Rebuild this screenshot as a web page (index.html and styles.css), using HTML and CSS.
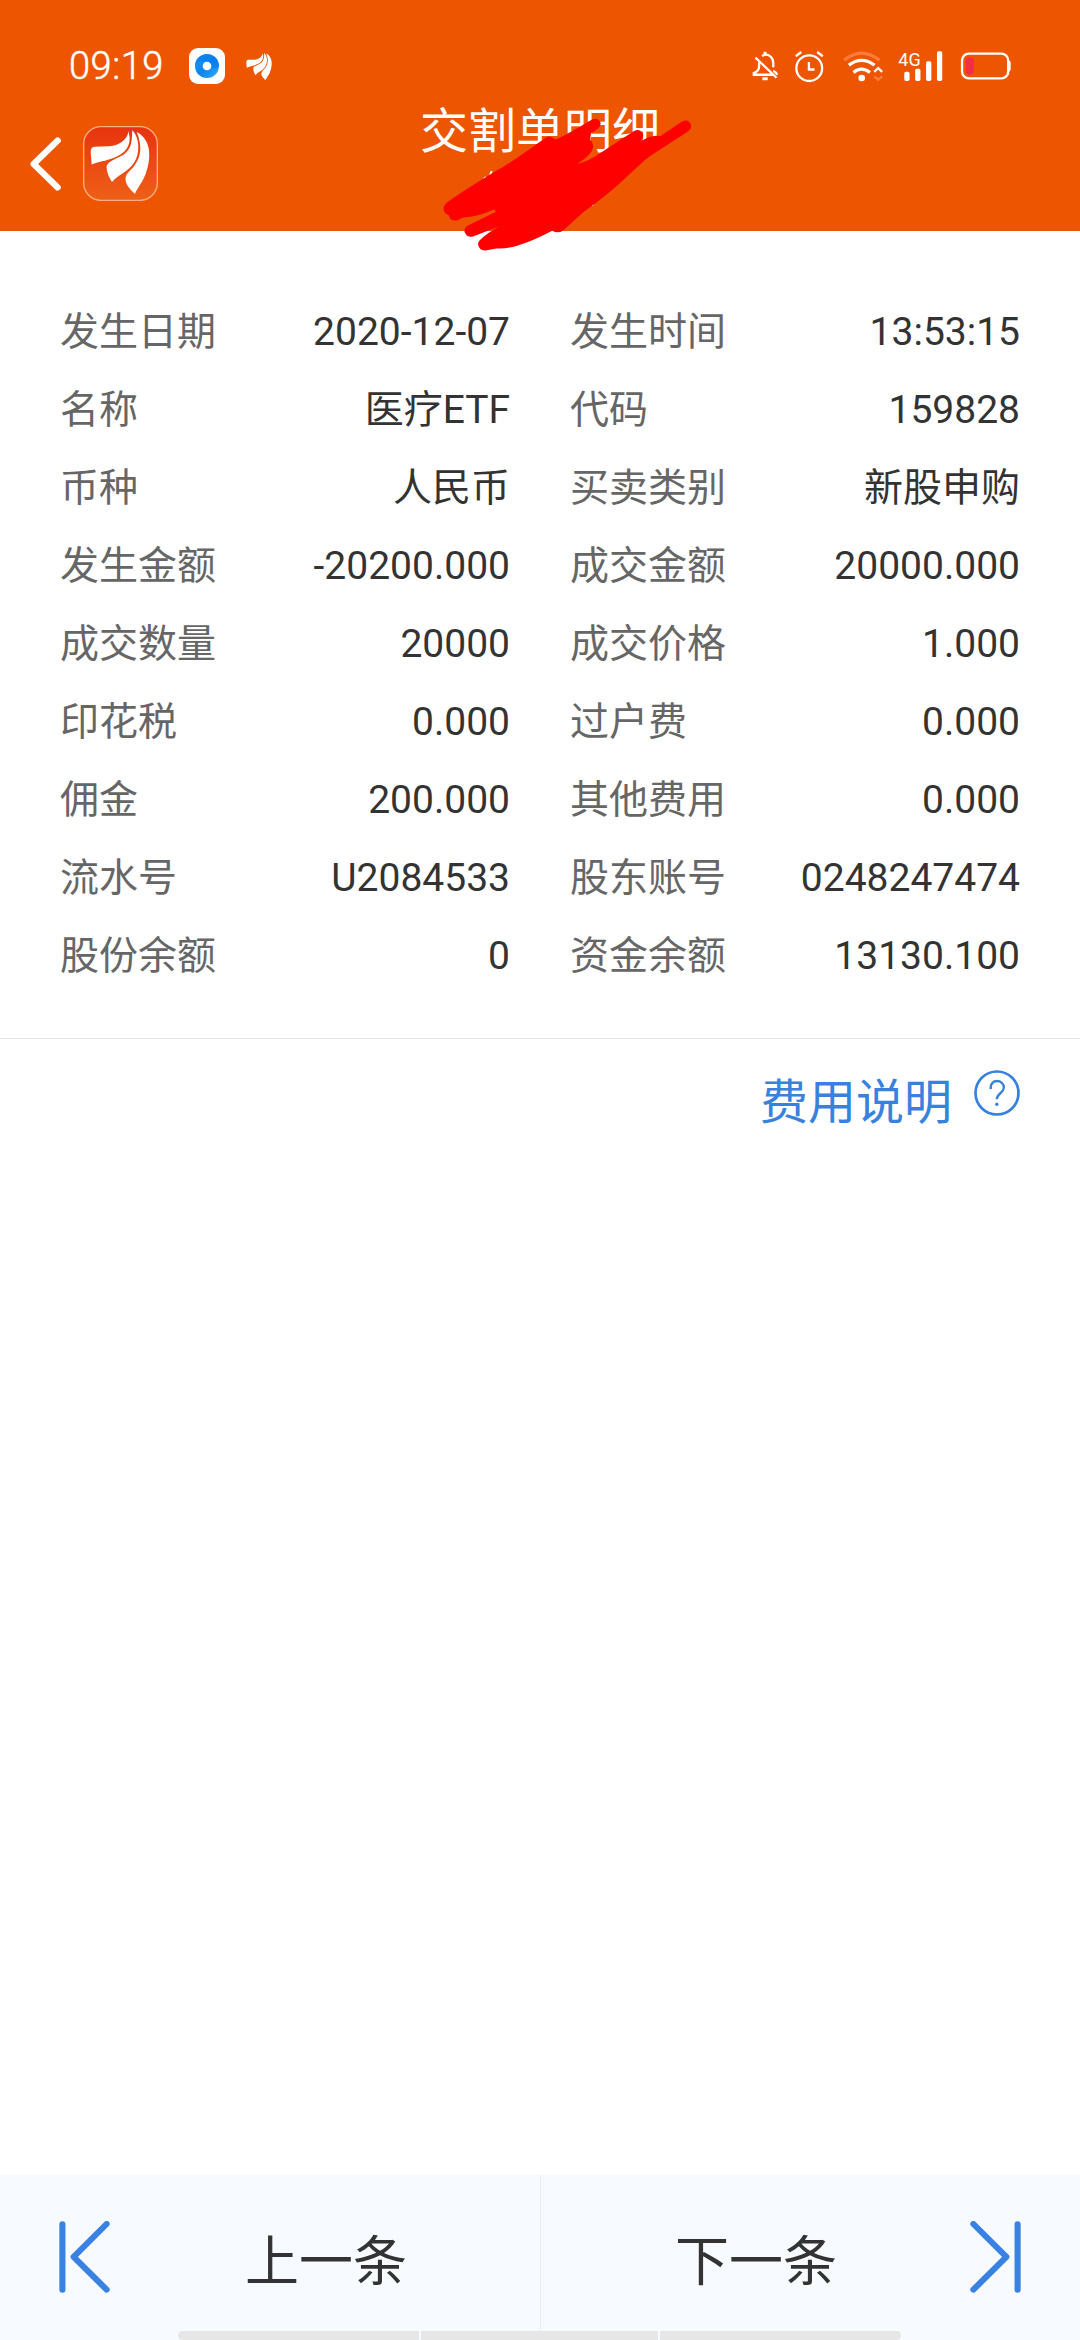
FILE: index.html
```html
<!DOCTYPE html>
<html lang="zh-CN">
<head>
<meta charset="utf-8">
<title>交割单明细</title>
<link rel="stylesheet" href="styles.css">
</head>
<body>
<div class="screen">
  <header class="header">
    <div class="status">
      <span class="clock">09:19</span>
      <svg class="app-badge" viewBox="0 0 108 108">
        <defs><linearGradient id="ring" x1="0" y1="0" x2="1" y2="1"><stop offset="0" stop-color="#1b9bfa"/><stop offset=".5" stop-color="#0a84ee"/><stop offset="1" stop-color="#35acff"/></linearGradient></defs>
        <rect width="108" height="108" rx="27" fill="#fff"/>
        <circle cx="54" cy="54" r="36" fill="url(#ring)"/>
        <path d="M18 52Q34 31 54 42Q75 74 90 54A36 36 0 0 0 24 34Q18 43 18 52Z" fill="#0879ea" opacity=".55"/>
        <circle cx="54" cy="54" r="13" fill="#fff"/>
      </svg>
      <svg class="feather" viewBox="270 298 180 196"><use href="#wing"/></svg>
      <svg class="system" viewBox="0 0 790 100" fill="none" stroke="#fff" stroke-width="7">
        <path d="M21 37V50Q21 64 5 70V75H67M30 18Q46 9 57 21Q65 29 64 43V52M64 63Q73 67 76 75M10 23L74 84"/>
        <path d="M39 5V13M31 87H47" stroke-width="9"/>
        <circle cx="173" cy="55" r="39"/>
        <path d="M172 36V59H189M132 19L149 6M197 6L214 19"/>
        <path d="M279 31Q331 -12 386 31" stroke="#ff7c38" stroke-width="10"/>
        <path d="M293 46Q331 17 371 46M307 68Q331 48 357 68" stroke-width="10"/>
        <circle cx="332" cy="85" r="10" fill="#fff" stroke="none"/>
        <path d="M370 66L382 55L394 66"/>
        <path d="M370 80L382 90L394 80" stroke="#ff7c38"/>
        <g fill="#fff" stroke="none">
          <rect x="461" y="66" width="16" height="28" rx="5"/>
          <rect x="494" y="57" width="16" height="37" rx="5"/>
          <rect x="527" y="34" width="16" height="60" rx="5"/>
          <rect x="560" y="4" width="16" height="90" rx="5"/>
          <text class="net" x="443" y="48" textLength="68" lengthAdjust="spacingAndGlyphs">4G</text>
        </g>
        <rect x="636" y="11" width="140" height="75" rx="21"/>
        <path d="M776 35Q780 35 780 40V57Q780 62 776 62"/>
        <rect x="647" y="22" width="25" height="53" rx="12" fill="#f22f45" stroke="none"/>
      </svg>
    </div>
    <div class="nav">
      <div class="nav-left">
        <svg class="back" viewBox="90 318 94 162" fill="none" stroke="#fff" stroke-width="19" stroke-linecap="round" stroke-linejoin="round"><path d="M174 328L101 399L174 470"/></svg>
        <svg class="logo" viewBox="249 288 225 225">
          <defs><linearGradient id="tile" x2="0" y2="1"><stop stop-color="#e8330f"/><stop offset="1" stop-color="#ee6017"/></linearGradient></defs>
          <rect x="251" y="290" width="221" height="221" rx="52" fill="url(#tile)" stroke="#ffad83" stroke-width="4"/>
          <g id="wing" fill="#fff">
            <path d="M386 304C381 329 360 346 328 349L283 350Q272 351 272 366L275 404Q280 401 298 396C345 386 390 370 389 324Z"/>
            <path d="M397 300C395 331 397 352 374 371C356 386 319 391 320 413Q321 433 336 456Q345 444 366 431C397 412 416 390 415 346Q414 321 397 300Z"/>
            <path d="M410 306C427 348 424 379 403 407C388 426 374 431 377 453Q380 470 405 492C410 475 425 463 437 432C455 382 454 329 410 306Z"/>
          </g>
        </svg>
      </div>
      <h1 class="title">交割单明细</h1>
    </div>
    <svg class="scribble" viewBox="120 80 760 410">
      <path d="M252 268L258 262M270 259L275 245M578 341V349" stroke="#fff" stroke-width="6"/>
      <path fill="#f00" d="M137 343Q150 329 290 243Q320 229 435 146Q450 134 466 150Q490 142 578 89Q595 83 602 98Q606 115 574 130L570 152Q580 155 580 173Q577 194 531 224Q570 214 604 189L703 124Q721 116 730 134Q732 147 721 157Q755 134 782 140L847 96Q866 87 874 105Q876 118 866 125L750 200Q735 211 670 272Q620 319 550 368L490 423Q475 434 457 424Q345 483 289 477L257 483Q237 484 234 463Q237 446 297 411L219 441Q198 446 193 425Q194 411 209 406L288 367L282 360Q235 382 190 384L171 393Q150 396 147 378Q128 370 131 352Z"/>
    </svg>
  </header>
  <main>
    <dl class="details">
      <div><dt>发生日期</dt><dd>2020-12-07</dd></div><div><dt>发生时间</dt><dd>13:53:15</dd></div>
      <div><dt>名称</dt><dd>医疗ETF</dd></div><div><dt>代码</dt><dd>159828</dd></div>
      <div><dt>币种</dt><dd>人民币</dd></div><div><dt>买卖类别</dt><dd>新股申购</dd></div>
      <div><dt>发生金额</dt><dd>-20200.000</dd></div><div><dt>成交金额</dt><dd>20000.000</dd></div>
      <div><dt>成交数量</dt><dd>20000</dd></div><div><dt>成交价格</dt><dd>1.000</dd></div>
      <div><dt>印花税</dt><dd>0.000</dd></div><div><dt>过户费</dt><dd>0.000</dd></div>
      <div><dt>佣金</dt><dd>200.000</dd></div><div><dt>其他费用</dt><dd>0.000</dd></div>
      <div><dt>流水号</dt><dd>U2084533</dd></div><div><dt>股东账号</dt><dd>0248247474</dd></div>
      <div><dt>股份余额</dt><dd>0</dd></div><div><dt>资金余额</dt><dd>13130.100</dd></div>
    </dl>
    <div class="fees">
      <span>费用说明</span>
      <svg class="help" viewBox="734 149 137 137" fill="none" stroke="#3882dd">
        <circle cx="802.5" cy="217.5" r="64" stroke-width="8"/>
        <path d="M784 206C780 173 824 176 823 202C822 218 802 219 802 236" stroke-width="7"/>
        <circle cx="802" cy="251" r="5" fill="#3882dd" stroke="none"/>
      </svg>
    </div>
  </main>
  <footer class="pager">
    <div class="prev">
      <svg class="arrow" viewBox="172 184 150 217" preserveAspectRatio="none"><path d="M182 194V391M312 193L215 292L312 391"/></svg>
      <span>上一条</span>
    </div>
    <div class="next">
      <span>下一条</span>
      <svg class="arrow" viewBox="1246 184 150 217" preserveAspectRatio="none"><path d="M1386 194V391M1256 193L1353 292L1256 391"/></svg>
    </div>
    <div class="gesture"><i></i><i></i><i></i></div>
  </footer>
</div>
</body>
</html>
```

FILE: styles.css
```css
* { box-sizing: border-box; }
body, h1, dl, dt, dd { margin: 0; }
body { font-family: Roboto, "Noto Sans CJK SC", sans-serif; color: #333; background: #fff; }
svg { display: block; flex: none; }
.screen { width: 1080px; height: 2340px; display: flex; flex-direction: column; overflow: hidden; }

.header { position: relative; height: 231px; background: #ed5500; color: #fff; }
.status { display: flex; align-items: center; height: 100px; padding: 32px 66px 0 69px; }
.clock { width: 120px; font: 300 38px/60px Roboto, sans-serif; letter-spacing: 0.5px; -webkit-text-stroke: 0.5px #fff; }
.app-badge { width: 36px; height: 36px; }
.feather { width: 26px; height: 29px; margin-left: 21px; }
.system { width: 263px; height: 33px; margin-left: auto; overflow: visible; }
.net { font: 400 53px Roboto, sans-serif; }
.nav { display: grid; grid-template-columns: 1fr auto 1fr; height: 131px; align-items: start; }
.nav-left { display: flex; align-items: center; gap: 22px; padding: 26px 0 0 30px; }
.back { width: 31px; height: 54px; }
.logo { width: 75px; height: 75px; }
.title { font-size: 48px; font-weight: 400; line-height: 60px; padding-top: 2px; }
.scribble { position: absolute; left: 440px; top: 116px; width: 253px; height: 137px; overflow: visible; }

main { flex: 1; }
.details { display: grid; grid-template-columns: 450px 450px; column-gap: 60px; height: 808px; padding: 62px 60px 0; grid-auto-rows: 78px; align-content: start; border-bottom: 1px solid #e8e8e8; }
.details div { display: flex; justify-content: space-between; font-size: 39px; line-height: 78px; }
.details dt { color: #666; }
.details dd { color: #333; }
.fees { display: flex; justify-content: flex-end; gap: 22px; padding: 31px 60px 0 0; color: #3882dd; font-size: 48px; line-height: 66px; }
.help { width: 46px; height: 46px; }

.pager { position: relative; display: grid; grid-template-columns: 1fr 1fr; height: 165px; background: #f7faff; font-size: 54px; }
.prev, .next { display: flex; padding: 46px 59px 0; line-height: 84px; }
.prev { gap: 135px; }
.next { justify-content: flex-end; gap: 133px; border-left: 1px solid #eceef1; }
.arrow { width: 51px; height: 72px; fill: none; stroke: #3882e1; stroke-width: 18; stroke-linecap: round; stroke-linejoin: round; }
.gesture { position: absolute; left: 178px; bottom: 0; width: 723px; height: 9px; display: grid; grid-template-columns: 241px 237px 241px; gap: 2px; border-radius: 5px; overflow: hidden; }
.gesture i { background: #e6e6e6; }
```
